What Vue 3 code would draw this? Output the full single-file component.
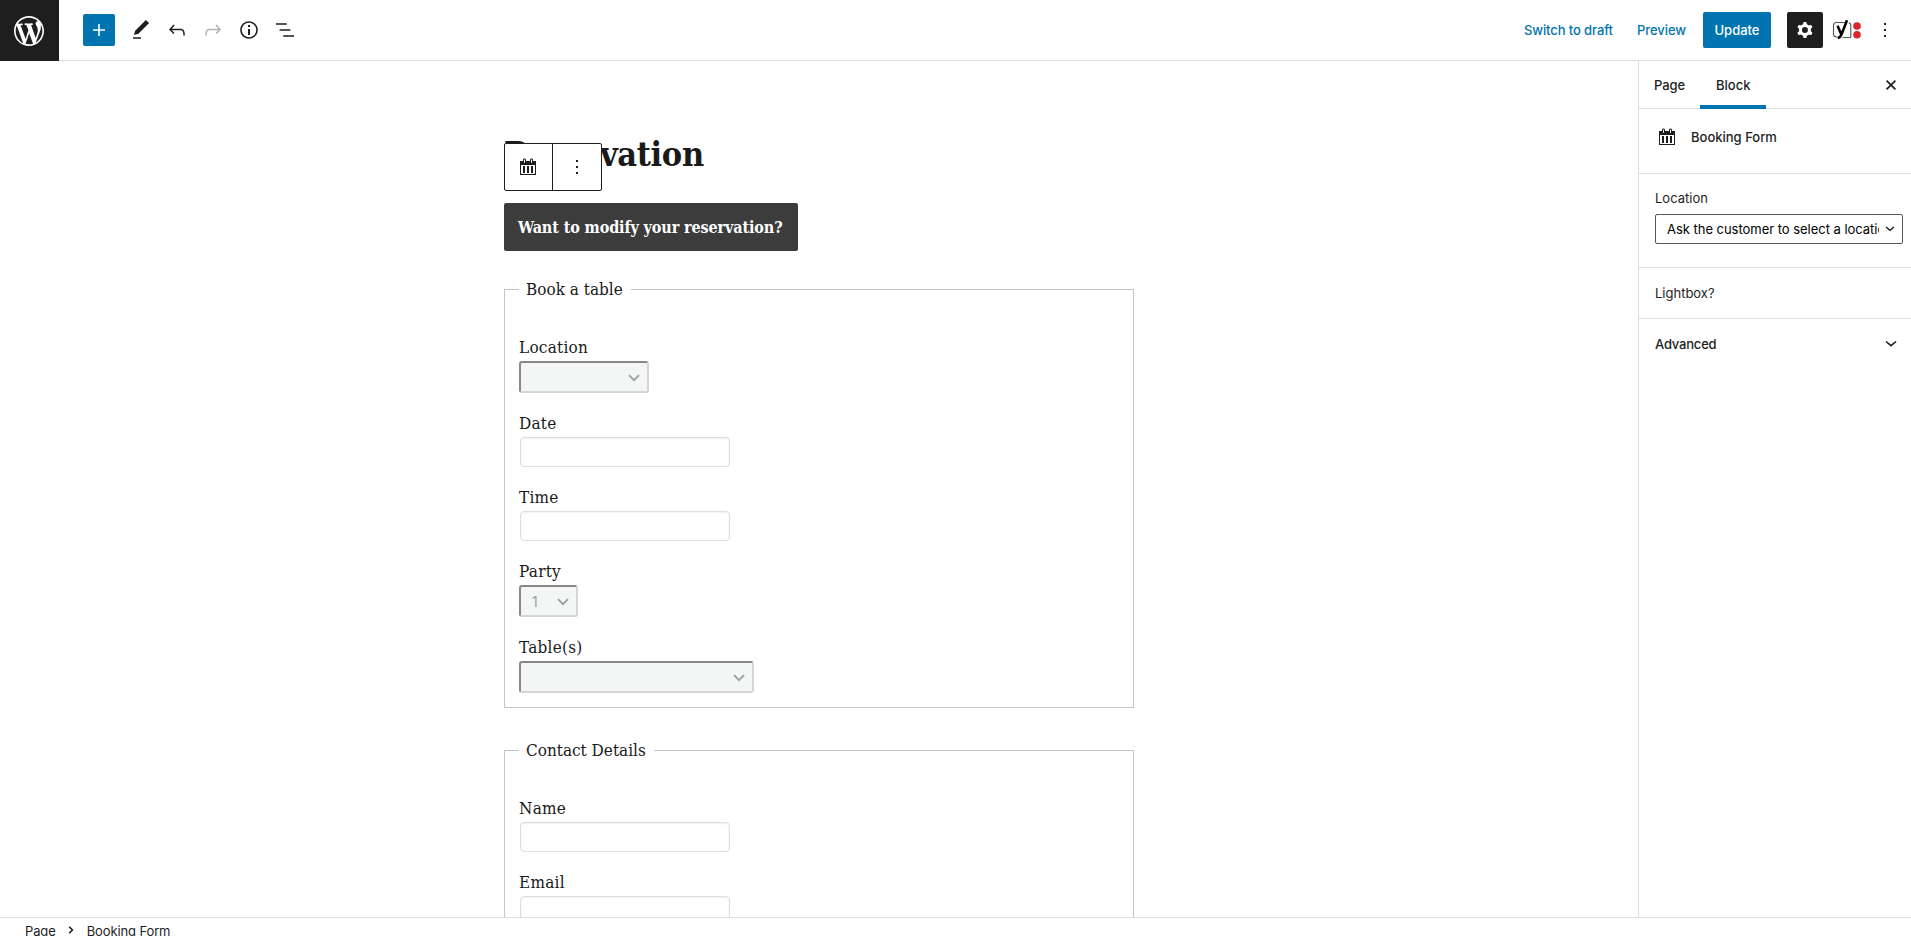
<script setup>
const bookingFields = [
  { label: 'Location', kind: 'select', size: 'medium', value: '' },
  { label: 'Date', kind: 'input' },
  { label: 'Time', kind: 'input' },
  { label: 'Party', kind: 'select', size: 'small', value: '1' },
  { label: 'Table(s)', kind: 'select', size: 'large', value: '' },
]
const contactFields = [
  { label: 'Name', kind: 'input' },
  { label: 'Email', kind: 'input' },
]
const groups = [
  { title: 'Book a table', fields: bookingFields },
  { title: 'Contact Details', fields: contactFields, open: true },
]
const calendar =
  'M15 4h3v14H2V4h3V3c0-.83.67-1.5 1.5-1.5S8 2.17 8 3v1h4V3c0-.83.67-1.5 1.5-1.5S15 2.17 15 3v1zM6 3v2.5c0 .28.22.5.5.5s.5-.22.5-.5V3c0-.28-.22-.5-.5-.5S6 2.72 6 3zm7 0v2.5c0 .28.22.5.5.5s.5-.22.5-.5V3c0-.28-.22-.5-.5-.5s-.5.22-.5.5zm4 14V8H3v9h14zM7 16V9H5v7h2zm4 0V9H9v7h2zm4 0V9h-2v7h2z'
const tools = [
  { name: 'edit', d: 'M20.1 5.1L16.9 2 6.2 12.7l-1.3 4.4 4.5-1.3L20.1 5.1zM4 20.8h8v-1.5H4v1.5z' },
  { name: 'undo', d: 'M18.3 11.7c-.6-.6-1.4-.9-2.3-.9H6.7l2.9-3.3-1.1-1-4.5 5L8.5 16l1-1-2.7-2.7H16c.5 0 .9.2 1.3.5 1 1 1 3.4 1 4.5v.3h1.5v-.2c0-1.5 0-4.3-1.5-5.7z' },
  { name: 'redo', off: true, d: 'M15.6 6.5l-1.1 1 2.9 3.3H8c-.9 0-1.7.3-2.3.9-1.4 1.5-1.4 4.2-1.4 5.6v.2h1.5v-.3c0-1.1 0-3.5 1-4.5.3-.3.7-.5 1.3-.5h9.2L14.5 15l1.1 1.1 4.6-4.6-4.6-5z' },
  { name: 'info', d: 'M12 3.2c-4.8 0-8.8 3.9-8.8 8.8 0 4.8 3.9 8.8 8.8 8.8 4.8 0 8.8-3.9 8.8-8.8 0-4.8-4-8.8-8.8-8.8zm0 16c-4 0-7.2-3.3-7.2-7.2C4.8 8 8 4.8 12 4.8s7.2 3.3 7.2 7.2c0 4-3.2 7.2-7.2 7.2zM11 17h2v-6h-2v6zm0-8h2V7h-2v2z' },
  { name: 'list', d: 'M13.8 5.2H3v1.5h10.8V5.2zm-3.6 12v1.5H21v-1.5H10.2zm7.2-6H6.6v1.5h10.8v-1.5z' },
]
</script>

<template>
  <div class="editor">
    <header class="topbar">
      <div class="wp">
        <svg width="30" height="30" viewBox="0 0 20 20"><path fill="#fff" d="M20 10c0-5.51-4.49-10-10-10C4.48 0 0 4.49 0 10c0 5.52 4.48 10 10 10 5.51 0 10-4.48 10-10zM7.78 15.37L4.37 6.22c.55-.02 1.17-.08 1.17-.08.5-.06.44-1.13-.06-1.11 0 0-1.45.11-2.37.11-.18 0-.37 0-.58-.01C4.12 2.69 6.87 1.11 10 1.11c2.33 0 4.45.87 6.05 2.34-.68-.11-1.65.39-1.65 1.58 0 .74.45 1.36.9 2.1.35.61.55 1.36.55 2.46 0 1.49-1.4 5-1.4 5l-3.03-8.37c.54-.02.82-.17.82-.17.5-.05.44-1.25-.06-1.22 0 0-1.44.12-2.38.12-.87 0-2.33-.12-2.33-.12-.5-.03-.56 1.2-.06 1.22l.92.08 1.26 3.41zM17.41 10c.24-.64.74-1.87.43-4.25.7 1.29 1.05 2.71 1.05 4.25 0 3.29-1.73 6.24-4.4 7.78.97-2.59 1.94-5.2 2.92-7.78zM6.1 18.09C3.12 16.65 1.11 13.53 1.11 10c0-1.3.23-2.48.72-3.59C3.25 10.3 4.67 14.2 6.1 18.09zm4.03-6.63l2.58 6.98c-.86.29-1.76.45-2.71.45-.79 0-1.57-.11-2.29-.33.81-2.38 1.62-4.74 2.42-7.1z" /></svg>
      </div>
      <div class="tools">
        <button class="add">
          <svg width="24" height="24" viewBox="0 0 24 24"><path fill="#fff" d="M18 11.2h-5.2V6h-1.6v5.2H6v1.6h5.2V18h1.6v-5.2H18z" /></svg>
        </button>
        <svg v-for="t in tools" :key="t.name" class="tool" :class="{ off: t.off }" width="24" height="24" viewBox="0 0 24 24"><path :d="t.d" /></svg>
      </div>
      <div class="actions">
        <a class="draft">Switch to draft</a>
        <a class="preview">Preview</a>
        <button class="update">Update</button>
        <button class="cog">
          <svg width="24" height="24" viewBox="0 0 24 24"><path fill="#fff" fill-rule="evenodd" d="M10.289 4.836A1 1 0 0111.275 4h1.306a1 1 0 01.987.836l.244 1.466c.787.26 1.503.679 2.108 1.218l1.393-.522a1 1 0 011.216.437l.653 1.13a1 1 0 01-.23 1.273l-1.148.944a6.025 6.025 0 010 2.435l1.149.946a1 1 0 01.23 1.272l-.653 1.13a1 1 0 01-1.216.437l-1.394-.522c-.605.54-1.32.958-2.108 1.218l-.244 1.466a1 1 0 01-.987.836h-1.306a1 1 0 01-.986-.836l-.244-1.466a5.995 5.995 0 01-2.108-1.218l-1.394.522a1 1 0 01-1.217-.436l-.653-1.131a1 1 0 01.23-1.272l1.149-.946a6.026 6.026 0 010-2.435l-1.148-.944a1 1 0 01-.23-1.272l.653-1.131a1 1 0 011.217-.437l1.393.522a5.994 5.994 0 012.108-1.218l.244-1.466zM14.929 12a3 3 0 11-6 0 3 3 0 016 0z" /></svg>
        </button>
        <svg class="yoast" width="30" height="22" viewBox="0 0 30 22">
          <path d="M13 3.5H4.5a3 3 0 0 0-3 3v8.5a3 3 0 0 0 3 3h1.2M10.5 18.5h8.3V7a3 3 0 0 0-2-3.2" fill="none" stroke="#555" stroke-width="1.1" />
          <path d="M5.6 6.8l3.4 8M15 1.2L9.8 14.8c-.8 2.2-1.8 3.9-4 4.1" fill="none" stroke="#000" stroke-width="2.5" />
          <circle cx="25" cy="7" r="3.8" fill="#dc2430" /><circle cx="25" cy="15.7" r="3.8" fill="#dc2430" />
        </svg>
        <svg class="more" width="24" height="24" viewBox="0 0 24 24"><path fill="#1e1e1e" d="M13 19h-2v-2h2v2zm0-6h-2v-2h2v2zm0-6h-2V5h2v2z" /></svg>
      </div>
    </header>

    <div class="body">
      <main class="canvas">
        <div class="post">
          <h1>Reservation</h1>
          <div class="blockbar">
            <div class="cell"><svg width="20" height="20" viewBox="0 0 20 20"><path fill="#1e1e1e" :d="calendar" /></svg></div>
            <div class="cell"><svg width="24" height="24" viewBox="0 0 24 24"><path fill="#1e1e1e" d="M13 19h-2v-2h2v2zm0-6h-2v-2h2v2zm0-6h-2V5h2v2z" /></svg></div>
          </div>
          <div class="modify"><span>Want to modify your reservation?</span></div>
          <fieldset v-for="g in groups" :key="g.title" :class="{ open: g.open }">
            <legend>{{ g.title }}</legend>
            <div class="fields">
              <div v-for="f in g.fields" :key="f.label" class="field">
                <label>{{ f.label }}</label>
                <div v-if="f.kind === 'select'" class="select" :class="f.size">
                  <span>{{ f.value }}</span>
                  <svg width="12" height="8" viewBox="0 0 12 8"><path d="M1 1.2l5 5 5-5" fill="none" stroke="#9a9fa3" stroke-width="1.8" /></svg>
                </div>
                <div v-else class="input"></div>
              </div>
            </div>
          </fieldset>
        </div>
      </main>

      <aside class="sidebar">
        <div class="tabs">
          <div class="tab">Page</div>
          <div class="tab active">Block</div>
          <svg class="close" width="12" height="12" viewBox="0 0 12 12"><path d="M1.6 1.6l8.8 8.8M10.4 1.6l-8.8 8.8" stroke="#1e1e1e" stroke-width="1.7" /></svg>
        </div>
        <div class="card">
          <svg width="20" height="20" viewBox="0 0 20 20"><path fill="#1e1e1e" :d="calendar" /></svg>
          <span>Booking Form</span>
        </div>
        <div class="panel location">
          <div class="caption">Location</div>
          <div class="picker">
            <span>Ask the customer to select a location</span>
            <svg width="10" height="6" viewBox="0 0 10 6"><path d="M1 1l4 3.4L9 1" fill="none" stroke="#1e1e1e" stroke-width="1.4" /></svg>
          </div>
        </div>
        <div class="panel lightbox">Lightbox?</div>
        <div class="panel advanced">
          <span>Advanced</span>
          <svg width="12" height="8" viewBox="0 0 12 8"><path d="M1 1.5l5 4.2 5-4.2" fill="none" stroke="#1e1e1e" stroke-width="1.6" /></svg>
        </div>
      </aside>
    </div>

    <footer class="crumbs">
      <span>Page</span>
      <svg width="6" height="8" viewBox="0 0 6 8"><path d="M1.2 .8L4.4 4 1.2 7.2" fill="none" stroke="#1e1e1e" stroke-width="1.6" /></svg>
      <span>Booking Form</span>
    </footer>
  </div>
</template>

<style>
html, body { background: #fff; overflow: hidden; }
</style>

<style scoped>
.editor { width: 1911px; height: 936px; overflow: hidden; display: flex; flex-direction: column; background: #fff; color: #1e1e1e; font: 13px/18px Inter, "Liberation Sans", sans-serif; }
.editor * { box-sizing: border-box; }
svg { display: block; flex: none; }
button { border: 0; padding: 0; border-radius: 2px; font: inherit; display: flex; align-items: center; justify-content: center; }
.topbar { height: 61px; flex: none; display: flex; border-bottom: 1px solid #ddd; }
.wp { width: 59px; height: 61px; background: #1e1e1e; padding: 16px 0 0 14px; }
.tools { display: flex; align-items: center; gap: 12px; padding-left: 24px; height: 60px; }
.add { width: 32px; height: 32px; background: #0073b1; margin-right: 2px; }
.tool { fill: #1e1e1e; }
.tool.off { fill: #b5b5b5; }
.actions { margin-left: auto; height: 60px; display: flex; align-items: center; padding-right: 14px; font-weight: 500; }
.actions a { color: #0073b1; }
.draft { margin-right: 24px; letter-spacing: -.1px; }
.preview { margin-right: 17px; letter-spacing: -.05px; }
.update { width: 68px; height: 36px; background: #0073b1; color: #fff; }
.cog { width: 36px; height: 36px; background: #1e1e1e; margin-left: 16px; }
.yoast { margin-left: 9px; margin-right: 11px; }
.body { height: 856px; flex: none; display: flex; }
.canvas { width: 1638px; overflow: hidden; }
.post { width: 630px; margin: 0 auto; position: relative; color: #1a1a1a; font: 17px/28px "DejaVu Serif Condensed", "DejaVu Serif", serif; font-stretch: condensed; }
h1 { margin: 0; padding-top: 65px; height: 142px; font-size: 34px; line-height: 56px; font-weight: 700; letter-spacing: -.35px; }
.blockbar { position: absolute; left: 0; top: 82px; width: 98px; height: 48px; display: flex; background: #fff; border: 1px solid #1e1e1e; border-radius: 2px; }
.cell { width: 47px; display: flex; align-items: center; justify-content: center; }
.cell:first-child { padding-right: 1px; }
.cell + .cell { width: 49px; border-left: 1px solid #1e1e1e; }
.modify { width: 294px; height: 48px; border-radius: 2px; background: #3c3c3c; color: #fff; padding: 1px 14px 0; display: flex; align-items: center; font-size: 16px; font-weight: 700; letter-spacing: -.12px; white-space: nowrap; }
fieldset { margin: 24px 0 0; min-width: 0; border: 1px solid #c3c4c7; padding: 0 14px 14px; }
fieldset + fieldset { margin-top: 28px; }
fieldset.open { padding-bottom: 60px; }
legend { padding: 0 8px 0 7px; letter-spacing: 0; }
.fields { padding-top: 30px; display: flex; flex-direction: column; gap: 16px; }
label { display: block; height: 28px; line-height: 29px; letter-spacing: .25px; }
.input { width: 210px; height: 30px; margin-left: 1px; border: 1px solid #ddd; border-radius: 4px; box-shadow: inset 0 1px 2px rgba(0, 0, 0, .06); }
.select { height: 32px; border: 2px solid; border-color: #888 #d5d5d5 #d5d5d5 #888; border-radius: 3px; background: #f4f6f5; display: flex; align-items: center; justify-content: space-between; padding: 1px 7px 0 11px; font: 14px/28px Inter, sans-serif; color: #9a9fa3; }
.select.medium { width: 130px; }
.select.small { width: 59px; }
.select.large { width: 235px; }
.sidebar { width: 273px; border-left: 1px solid #ddd; }
.tabs { height: 48px; display: flex; align-items: stretch; border-bottom: 1px solid #ddd; font-weight: 500; position: relative; }
.tab { padding: 0 16px; line-height: 48px; height: 48px; }
.tab:first-child { width: 61px; padding-left: 15px; letter-spacing: -.1px; }
.tab.active { width: 66px; box-shadow: inset 0 -4px 0 #0073b1; }
.close { margin: 18px 14px 0 auto; }
.card { height: 65px; padding: 18px 0 0 18px; display: flex; gap: 14px; border-bottom: 1px solid #ddd; font-weight: 500; line-height: 20px; }
.panel { border-bottom: 1px solid #ddd; padding: 0 16px; }
.location { height: 94px; padding: 15px 7px 0 16px; }
.caption { line-height: 18px; margin-bottom: 7px; }
.picker { width: 248px; height: 30px; border: 1px solid #555; border-radius: 2px; padding: 0 7px 0 11px; display: flex; align-items: center; gap: 6px; color: #000; }
.picker span { flex: 1; overflow: hidden; white-space: nowrap; letter-spacing: -.03px; }
.lightbox { height: 51px; line-height: 51px; }
.advanced { height: 50px; border: 0; display: flex; align-items: center; justify-content: space-between; font-weight: 500; padding-right: 14px; letter-spacing: -.2px; }
.crumbs { height: 24px; flex: none; border-top: 1px solid #ddd; display: flex; align-items: flex-start; gap: 12.5px; padding: 4px 0 0 25px; overflow: hidden; letter-spacing: -.12px; }
.crumbs svg { margin-top: 4px; }
</style>
